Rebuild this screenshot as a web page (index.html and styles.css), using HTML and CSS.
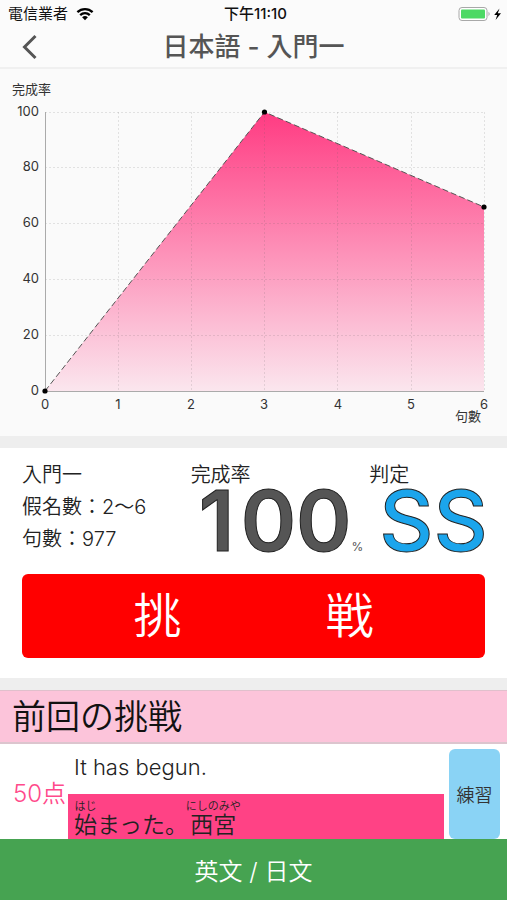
FILE: index.html
```html
<!DOCTYPE html>
<html lang="zh-Hant">
<head>
<meta charset="utf-8">
<meta name="viewport" content="width=device-width, initial-scale=1">
<title>日本語 - 入門一</title>
<link rel="stylesheet" href="styles.css">
</head>
<body>
<header class="top">
  <div class="status">
    <div class="carrier">
      <span>電信業者</span>
      <svg width="18" height="14" viewBox="0 0 18 14" aria-hidden="true">
        <path d="M1.4 5.2a11 11 0 0 1 15.2 0M4.2 8.1a7 7 0 0 1 9.6 0" fill="none" stroke="#000" stroke-width="2.3"/>
        <path d="M9 13.2L6.1 10.3a4.2 4.2 0 0 1 5.8 0z" fill="#000"/>
      </svg>
    </div>
    <div class="clock">下午11:10</div>
    <div class="power">
      <svg width="45" height="16" viewBox="0 0 45 16" aria-hidden="true">
        <rect x="1" y="1.5" width="28" height="13" rx="3" fill="#fff" stroke="#a8a8a8"/>
        <rect x="3" y="3.5" width="24" height="9" rx="1" fill="#4cd964"/>
        <path d="M30.5 5.8q2.4 2.2 0 4.4z" fill="#a8a8a8"/>
        <path d="M41.5 2.5L36.2 9h3l-1.6 5L43 7.3h-3.2z" fill="#000"/>
      </svg>
    </div>
  </div>
  <div class="nav">
    <button class="back" type="button" aria-label="返回">
      <svg width="18" height="26" viewBox="0 0 18 26" aria-hidden="true"><path d="M14.5 2L3.5 13l11 11" fill="none" stroke="#555" stroke-width="3"/></svg>
    </button>
    <h1>日本語 - 入門一</h1>
  </div>
</header>
<main>
  <section class="chart">
    <svg viewBox="0 0 507 367" role="img" aria-label="完成率">
      <defs>
        <linearGradient id="fill" x1="0" y1="0" x2="0" y2="1">
          <stop offset="0" stop-color="#ff3b82"/>
          <stop offset="1" stop-color="#fbe6ee"/>
        </linearGradient>
      </defs>
      <path d="M45 322L264.5 43L484 138V322z" fill="url(#fill)"/>
      <path class="grid" d="M45 43.5H484M45 98.5H484M45 154.5H484M45 210.5H484M45 266.5H484M118.5 43V322M191.5 43V322M264.5 43V322M337.5 43V322M411.5 43V322M484.5 43V322"/>
      <path class="axis" d="M45.5 43V322.5H484"/>
      <path class="line" d="M45 322L264.5 43L484 138"/>
      <circle cx="45" cy="322" r="2.6"/><circle cx="264.5" cy="43" r="2.6"/><circle cx="484" cy="138" r="2.6"/>
      <text class="name" x="12" y="25">完成率</text>
      <g class="end">
        <text x="39" y="47">100</text><text x="39" y="102">80</text><text x="39" y="158">60</text>
        <text x="39" y="214">40</text><text x="39" y="270">20</text><text x="39" y="326">0</text>
      </g>
      <g class="mid">
        <text x="45" y="340">0</text><text x="118" y="340">1</text><text x="191" y="340">2</text><text x="264" y="340">3</text>
        <text x="338" y="340">4</text><text x="411" y="340">5</text><text x="484" y="340">6</text>
      </g>
      <text class="name" x="455" y="352">句數</text>
    </svg>
  </section>
  <section class="summary">
    <div class="stats">
      <div class="info">
        <div>入門一</div>
        <div>假名數：2〜6</div>
        <div>句數：977</div>
      </div>
      <div>
        <div class="label">完成率</div>
        <div class="big rate"><span class="hundreds">1</span>00<small>%</small></div>
      </div>
      <div>
        <div class="label">判定</div>
        <div class="big rank">SS</div>
      </div>
    </div>
    <button class="challenge" type="button" lang="ja">挑　　　戦</button>
  </section>
  <section class="history" lang="ja">
    <h2>前回の挑戦</h2>
    <div class="entry">
      <div class="score">50点</div>
      <div class="phrase">
        <p class="en">It has begun.</p>
        <p class="ja"><ruby>始<rt>はじ</rt></ruby>まった。<ruby>西宮<rt>にしのみや</rt></ruby></p>
      </div>
      <button class="practice" type="button">練習</button>
    </div>
  </section>
</main>
<button class="toggle" type="button">英文 / 日文</button>
</body>
</html>
```
FILE: styles.css
```css
* {
  box-sizing: border-box;
}

body {
  margin: 0;
  height: 100vh;
  display: flex;
  flex-direction: column;
  background: #fff;
  color: #222;
  font-family: Inter, "Noto Sans CJK TC", sans-serif;
}

:lang(ja) {
  font-family: Inter, "Noto Sans CJK JP", sans-serif;
}

h1, h2, p {
  margin: 0;
  font-weight: 400;
}

button {
  border: 0;
  padding: 0;
  font: inherit;
  cursor: pointer;
}

svg {
  display: block;
}

.top {
  background: #fbfbfb;
  border-bottom: 2px solid #f0f0f0;
}

.status {
  display: grid;
  grid-template-columns: 1fr auto 1fr;
  align-items: center;
  height: 27px;
  padding: 0 4px 0 8px;
  font-size: 15px;
  line-height: 20px;
  color: #111;
}

.carrier {
  display: flex;
  align-items: center;
  gap: 8px;
}

.clock {
  font-weight: 500;
}

.power {
  justify-self: end;
}

.nav {
  display: grid;
  grid-template-columns: 60px 1fr 60px;
  align-items: center;
  height: 40px;
}

.back {
  display: flex;
  justify-content: center;
  background: none;
}

h1 {
  text-align: center;
  font-size: 26px;
  line-height: 40px;
  font-weight: 500;
  color: #555;
}

main {
  flex: 1;
  min-height: 0;
  overflow-y: auto;
  scrollbar-width: none;
}

.chart {
  background: #fafafa;
  border-bottom: 12px solid #eee;
}

.chart svg {
  width: 100%;
  height: auto;
}

.chart text {
  font-size: 13px;
  fill: #333;
}

.end {
  text-anchor: end;
}

.mid {
  text-anchor: middle;
}

.grid {
  fill: none;
  stroke: #555;
  stroke-opacity: 0.15;
  stroke-dasharray: 2 2;
}

.axis {
  fill: none;
  stroke: #aaa;
}

.line {
  fill: none;
  stroke: #555;
  stroke-dasharray: 6 3;
}

.summary {
  padding: 11px 22px 20px;
  border-bottom: 12px solid #eee;
}

.stats {
  display: grid;
  grid-template-columns: 169fr 179fr 116fr;
  margin-bottom: 19px;
  font-size: 20px;
  font-weight: 350;
  line-height: 32px;
}

.stats > div {
  min-width: 0;
  white-space: nowrap;
}

.big {
  font-size: 84px;
  font-weight: 500;
  line-height: 60px;
  -webkit-text-stroke: 1px #222;
}

.rate {
  padding-left: 8px;
  font-weight: 600;
  color: #555;
}

.hundreds {
  display: inline-block;
  width: 42px;
}

.rate small {
  font-size: 12px;
  font-weight: 400;
  line-height: 1;
  -webkit-text-stroke: 0;
}

.rank {
  padding-left: 10px;
  color: #1ba5ec;
}

.challenge {
  display: block;
  width: 100%;
  border-radius: 6px;
  background: #f00;
  color: #fff;
  font-size: 48px;
  font-weight: 350;
  line-height: 84px;
}

h2 {
  padding-left: 12px;
  border-bottom: 2px solid #dcc5ce;
  border-top: 1px solid #e0c0cc;
  background: #fcc4da;
  color: #111;
  font-size: 34px;
  font-weight: 350;
  line-height: 51px;
}

.entry {
  display: grid;
  grid-template-columns: 68px 1fr 51px;
  align-items: start;
  padding: 5px 7px 0 0;
}

.score {
  padding-left: 13px;
  color: #ff4a8b;
  font-size: 24px;
  font-weight: 350;
  line-height: 90px;
  white-space: nowrap;
}

.en {
  padding-left: 6px;
  font-size: 22px;
  font-weight: 350;
  line-height: 36px;
}

.ja {
  margin: 9px 5px 0 0;
  padding: 9px 0 0 6px;
  background: #ff4285;
  font-size: 23px;
  font-weight: 350;
  line-height: 45px;
}

ruby {
  ruby-align: center;
}

rt {
  font-size: 11px;
  line-height: 12px;
}

.practice {
  height: 90px;
  border-radius: 6px;
  background: #8ad3f5;
  color: #333;
  font-size: 18px;
  font-weight: 350;
}

.toggle {
  height: 61px;
  background: #46a351;
  color: #fff;
  font-size: 24px;
  font-weight: 350;
}
```
